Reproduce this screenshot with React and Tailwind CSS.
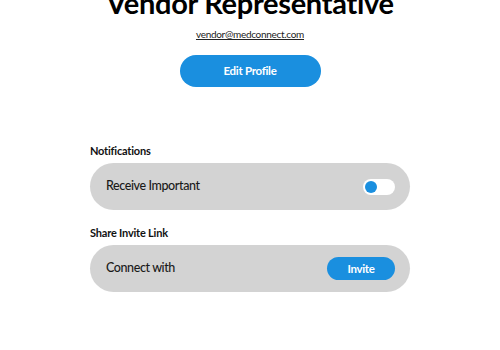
export default function App() {
  return (
    <div className="w-[500px] h-[350px] overflow-hidden bg-white" style={{ fontFamily: '"Lato", "Noto Sans", sans-serif' }}>
      <div className="flex flex-col items-center">
        <h1 className="mt-[-13px] text-[29px] leading-[32px] font-bold tracking-[-0.3px] text-black">Vendor Representative</h1>
        <a className="mt-[8px] text-[10px] leading-[14px] tracking-[-0.3px] text-[#222] underline">vendor@medconnect.com</a>
        <button className="mt-[14px] w-[141px] h-[32px] rounded-full bg-[#1a8fdf] text-white text-[11.5px] tracking-[-0.3px] font-bold">
          Edit Profile
        </button>
      </div>

      <div className="mx-[90px] mt-[57px]">
        <h2 className="text-[11px] font-bold text-[#111] tracking-[-0.2px] leading-[14px]">Notifications</h2>
        <div className="mt-[5px] h-[47px] rounded-[24px] bg-[#d3d3d3] flex items-center justify-between pl-[16px] pr-[15px]">
          <span className="text-[12.5px] font-medium tracking-[-0.4px] text-[#1a1a1a]">Receive Important</span>
          <div className="w-[32px] h-[16px] rounded-full bg-white flex items-center px-[2px]">
            <div className="w-[12px] h-[12px] rounded-full bg-[#1a8fdf]" />
          </div>
        </div>

        <h2 className="mt-[16px] text-[11px] tracking-[-0.2px] font-bold text-[#111] leading-[14px]">Share Invite Link</h2>
        <div className="mt-[5px] h-[47px] rounded-[24px] bg-[#d3d3d3] flex items-center justify-between pl-[16px] pr-[15px]">
          <span className="text-[12.5px] font-medium tracking-[-0.4px] text-[#1a1a1a]">Connect with</span>
          <button className="w-[68px] h-[23px] rounded-full bg-[#1a8fdf] text-white text-[11.5px] tracking-[-0.3px] font-bold">Invite</button>
        </div>
      </div>
    </div>
  );
}
